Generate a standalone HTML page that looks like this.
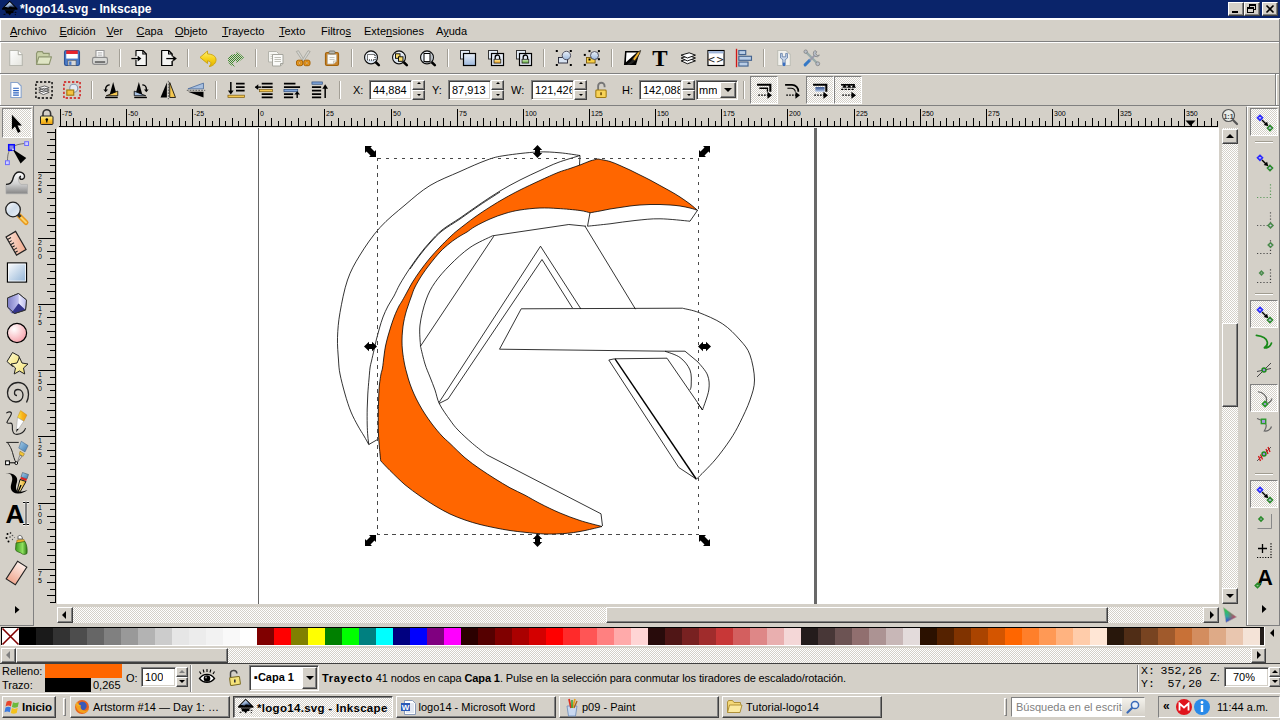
<!DOCTYPE html>
<html lang="es"><head><meta charset="utf-8"><title>*logo14.svg - Inkscape</title>
<style>
*{box-sizing:border-box;margin:0;padding:0}
html,body{width:1280px;height:720px;overflow:hidden;background:#d4d0c8;font-family:"Liberation Sans",sans-serif;font-size:11px;color:#000}
.a{position:absolute}
#title{left:0;top:0;width:1280px;height:18px;background:#0a246a}
#title .t{left:20px;top:1px;color:#fff;font-weight:bold;font-size:12px;line-height:16px;white-space:nowrap;letter-spacing:.1px}
.wb{top:2px;width:16px;height:14px;background:#d4d0c8;border:1px solid;border-color:#fff #404040 #404040 #fff;box-shadow:inset -1px -1px 0 #808080}
.hl{left:0;width:1280px;height:2px;border-top:1px solid #808080;border-bottom:1px solid #fff}
#menu span{position:absolute;top:24px;font-size:11px;line-height:14px;white-space:nowrap}
#menu u{text-decoration:underline;text-underline-offset:1px}
.sep{width:2px;height:26px;border-left:1px solid #a39f96;border-right:1px solid #fff}
.chk{background:conic-gradient(#fff 25%,#d4d0c8 0 50%,#fff 0 75%,#d4d0c8 0) 0 0/2px 2px}
.btn{background:#d4d0c8;border:1px solid;border-color:#fff #404040 #404040 #fff;box-shadow:inset -1px -1px 0 #808080,inset 1px 1px 0 #d4d0c8}
.sunk{border:1px solid;border-color:#808080 #fff #fff #808080;box-shadow:inset 1px 1px 0 #404040,inset -1px -1px 0 #d4d0c8;background:#fff}
.pressed{border:1px solid;border-color:#808080 #fff #fff #808080}
.lbl{font-size:11px;line-height:13px;white-space:nowrap}
.inp{font-size:11px;line-height:14px;white-space:nowrap;overflow:hidden}
#pal i{position:absolute;top:0;width:17px;height:17px;display:block}
.rl{font-family:"Liberation Sans",sans-serif;font-size:7px;fill:#000}
svg{position:absolute;overflow:visible}
.arr{width:0;height:0;border:4px solid transparent;position:absolute}
.tk{top:696px;height:22px;background:#d4d0c8;border:1px solid;border-color:#fff #404040 #404040 #fff;box-shadow:inset -1px -1px 0 #808080;font-size:11px;line-height:20px;white-space:nowrap;overflow:hidden}
.tk b,.tk span{position:absolute;top:0}

</style></head>
<body>
<div id="title" class="a"><div class="a t">*logo14.svg - Inkscape</div>
<svg class="a" style="left:0px;top:0px" width="20" height="18" viewBox="0 0 20 18"><defs><linearGradient id="gink1" x1="0" y1="0" x2=".7" y2="1"><stop offset="0" stop-color="#ffffff"/><stop offset=".55" stop-color="#9ab4d8"/><stop offset="1" stop-color="#1a3058"/></linearGradient></defs><path d="M9.700 .800L17.300 8.200c.6.700.3 1.500-.7 1.600L2.900 9.800c-.9-.1-1.200-.9-.6-1.600z" fill="#000"/><path d="M9.700 1.900L4.500 7.300c1.400-.5 2.700-.3 3.700.4 1.200-1.400 2.900-1.500 4.300-.5l2.600.1z" fill="url(#gink1)"/><path d="M4.500 10.300h10.500l-1.800 1.400.6 1.100-2.700.4-1.300 2.300-1.600-2-2.600-.2.400-1.400z" fill="#000"/><ellipse cx="4.500" cy="14.300" rx="1.100" ry=".5" fill="#000"/><ellipse cx="15.500" cy="12.200" rx="1" ry=".5" fill="#000"/><circle cx="15.300" cy="14.600" r=".6" fill="#000"/></svg>
<div class="a wb" style="left:1228px"><div class="a" style="left:3px;top:8px;width:6px;height:2px;background:#000"></div></div>
<div class="a wb" style="left:1244px"><div class="a" style="left:4px;top:1px;width:7px;height:6px;border:1px solid #000;border-top-width:2px"></div><div class="a" style="left:2px;top:4px;width:7px;height:6px;border:1px solid #000;border-top-width:2px;background:#d4d0c8"></div></div>
<div class="a wb" style="left:1262px"><svg style="left:3px;top:2px" width="9" height="8" viewBox="0 0 9 8"><path d="M.5.500l7 7M7.500.500l-7 7" stroke="#000" stroke-width="1.600"/></svg></div>
</div>
<div class="a" style="left:0;top:18px;width:1280px;height:2px;background:#fff"></div><div class="a" style="left:0;top:20px;width:1px;height:86px;background:#fff"></div>
<div id="menu">
<span style="left:10px"><u>A</u>rchivo</span><span style="left:59.500px"><u>E</u>dición</span><span style="left:106.500px"><u>V</u>er</span><span style="left:136.500px"><u>C</u>apa</span><span style="left:175px"><u>O</u>bjeto</span><span style="left:222px"><u>T</u>rayecto</span><span style="left:279px"><u>T</u>exto</span><span style="left:321px">Filtro<u>s</u></span><span style="left:364px">Exte<u>n</u>siones</span><span style="left:436px">A<u>y</u>uda</span>
</div>
<div class="a hl" style="top:41px"></div>
<div id="tb1"><div class="a sep" style="left:119px;top:49px;height:18px"></div>
<div class="a sep" style="left:187px;top:49px;height:18px"></div>
<div class="a sep" style="left:255px;top:49px;height:18px"></div>
<div class="a sep" style="left:351px;top:49px;height:18px"></div>
<div class="a sep" style="left:447px;top:49px;height:18px"></div>
<div class="a sep" style="left:543px;top:49px;height:18px"></div>
<div class="a sep" style="left:611px;top:49px;height:18px"></div>
<div class="a sep" style="left:763px;top:49px;height:18px"></div>
<div class="a sep" style="left:91px;top:81px;height:18px"></div>
<div class="a sep" style="left:215px;top:81px;height:18px"></div>
<div class="a sep" style="left:339px;top:81px;height:18px"></div>
<div class="a sep" style="left:743px;top:81px;height:18px"></div>
<div class="a chk pressed" style="left:750px;top:76px;width:28px;height:28px"></div>
<div class="a chk pressed" style="left:806px;top:76px;width:28px;height:28px"></div>
<div class="a chk pressed" style="left:834px;top:76px;width:28px;height:28px"></div>
<div class="a lbl" style="left:353px;top:84px">X:</div><div class="a sunk" style="left:369px;top:80px;width:43px;height:20px"><div class="a inp" style="left:3px;top:2px;width:37px">44,884</div></div><div class="a btn" style="left:412px;top:80px;width:13px;height:10px"><div class="arr" style="left:3.500px;top:1px;border-width:2.500px;border-top-width:0;border-bottom-color:#000"></div></div><div class="a btn" style="left:412px;top:90px;width:13px;height:10px"><div class="arr" style="left:3.500px;top:3px;border-width:2.500px;border-bottom-width:0;border-top-color:#000"></div></div>
<div class="a lbl" style="left:432px;top:84px">Y:</div><div class="a sunk" style="left:448px;top:80px;width:43px;height:20px"><div class="a inp" style="left:3px;top:2px;width:37px">87,913</div></div><div class="a btn" style="left:491px;top:80px;width:13px;height:10px"><div class="arr" style="left:3.500px;top:1px;border-width:2.500px;border-top-width:0;border-bottom-color:#000"></div></div><div class="a btn" style="left:491px;top:90px;width:13px;height:10px"><div class="arr" style="left:3.500px;top:3px;border-width:2.500px;border-bottom-width:0;border-top-color:#000"></div></div>
<div class="a lbl" style="left:511px;top:84px">W:</div><div class="a sunk" style="left:531px;top:80px;width:43px;height:20px"><div class="a inp" style="left:3px;top:2px;width:37px">121,426</div></div><div class="a btn" style="left:574px;top:80px;width:13px;height:10px"><div class="arr" style="left:3.500px;top:1px;border-width:2.500px;border-top-width:0;border-bottom-color:#000"></div></div><div class="a btn" style="left:574px;top:90px;width:13px;height:10px"><div class="arr" style="left:3.500px;top:3px;border-width:2.500px;border-bottom-width:0;border-top-color:#000"></div></div>
<div class="a lbl" style="left:622px;top:84px">H:</div><div class="a sunk" style="left:639px;top:80px;width:43px;height:20px"><div class="a inp" style="left:3px;top:2px;width:37px">142,088</div></div><div class="a btn" style="left:682px;top:80px;width:13px;height:10px"><div class="arr" style="left:3.500px;top:1px;border-width:2.500px;border-top-width:0;border-bottom-color:#000"></div></div><div class="a btn" style="left:682px;top:90px;width:13px;height:10px"><div class="arr" style="left:3.500px;top:3px;border-width:2.500px;border-bottom-width:0;border-top-color:#000"></div></div>
<div class="a sunk" style="left:696px;top:80px;width:42px;height:20px"><div class="a inp" style="left:2px;top:2px">mm</div></div><div class="a btn" style="left:720px;top:82px;width:16px;height:16px"><div class="arr" style="left:3px;top:5px;border-top-color:#000"></div></div>
<svg class="a" style="left:0;top:0" width="1280" height="110" viewBox="0 0 1280 110"><defs>
<radialGradient id="glens" cx=".4" cy=".35" r=".8"><stop offset="0" stop-color="#ffffff"/><stop offset="1" stop-color="#b4c8e0"/></radialGradient>
<linearGradient id="gundo" x1="0" y1="0" x2="0" y2="1"><stop offset="0" stop-color="#fdf07a"/><stop offset=".5" stop-color="#f7d21a"/><stop offset="1" stop-color="#e0b000"/></linearGradient>
<linearGradient id="gyel" x1="0" y1="0" x2="0" y2="1"><stop offset="0" stop-color="#fff2a8"/><stop offset="1" stop-color="#f0a018"/></linearGradient>
<linearGradient id="ggrn" x1="0" y1="0" x2="0" y2="1"><stop offset="0" stop-color="#d8f0c0"/><stop offset="1" stop-color="#58a838"/></linearGradient>
<linearGradient id="gpage" x1="0" y1="0" x2="1" y2="1"><stop offset="0" stop-color="#fff"/><stop offset="1" stop-color="#e4e4de"/></linearGradient>
<linearGradient id="gblue" x1="0" y1="0" x2="0" y2="1"><stop offset="0" stop-color="#eaf0f8"/><stop offset="1" stop-color="#9db8dc"/></linearGradient>
<pattern id="ghatch" width="2" height="2" patternUnits="userSpaceOnUse"><rect width="2" height="2" fill="#d4d0c8"/><rect width="1" height="1" fill="#3c8a2c"/><rect x="1" y="1" width="1" height="1" fill="#3c8a2c"/></pattern>
</defs><g transform="translate(6.80 48.80) scale(1.15)"><path d="M2.500 1.500h7.500l3.500 3.500v9.500h-11z" fill="url(#gpage)" stroke="#b8b8b0" stroke-width="1"/><path d="M10 1.500v3.500h3.500" fill="#fff" stroke="#b8b8b0" stroke-width="1" stroke-linejoin="round"/></g>
<g transform="translate(34.80 48.80) scale(1.15)"><path d="M1.500 13.500v-9.500l1-1.500h4l1 1.500h5v2" fill="#c9d1a8" stroke="#8e9670" stroke-width="1"/><path d="M1.500 13.500l2-6.500h11l-2 6.500z" fill="#dfe5c4" stroke="#8e9670" stroke-width="1" stroke-linejoin="round"/></g>
<g transform="translate(62.80 48.80) scale(1.15)"><rect x="1.500" y="1.500" width="13" height="13" rx="1.500" fill="#4a7bc8" stroke="#2f5596"/><rect x="3" y="1.500" width="10" height="3" fill="#e8232c"/><rect x="3" y="4.500" width="10" height="4" fill="#fff"/><rect x="4.500" y="10" width="7" height="4.500" fill="#d8d8d8" stroke="#555" stroke-width=".5"/><rect x="5.500" y="11" width="2" height="3" fill="#4a7bc8"/></g>
<g transform="translate(90.80 48.80) scale(1.15)"><path d="M4.500 7v-5.500h7v5.500" fill="#fff" stroke="#999"/><path d="M6 3.500h4M6 5.500h4" stroke="#bbb"/><rect x="1.500" y="7.500" width="13" height="6" rx="1.500" fill="#d9d9d6" stroke="#8c8c8c"/><path d="M3.500 11.500h9" stroke="#666" stroke-width="1.500"/></g>
<g transform="translate(130.80 48.80) scale(1.15)"><path d="M4.500 6.500v-5h6l3 3v10h-9v-5" fill="#f4f4f2" stroke="#000" stroke-linejoin="round"/><path d="M10.500 1.500v3h3" fill="none" stroke="#000"/><path d="M.500 8.500h6" stroke="#000" stroke-width="1.100"/><path d="M6 6l3.200 2.500-3.200 2.500z" fill="#000"/></g>
<g transform="translate(158.80 48.80) scale(1.15)"><path d="M2.500 1.500h6l3 3v2.500M11.500 10v4.500h-9v-13" fill="#f4f4f2" stroke="#000" stroke-linejoin="round"/><path d="M2.500 1.500h6l3 3v10h-9z" fill="#f4f4f2" stroke="none"/><path d="M2.500 1.500h6l3 3v2M11.500 10.500v4h-9v-13M8.500 1.500v3h3" fill="none" stroke="#000"/><path d="M6.500 8.500h7" stroke="#000" stroke-width="1.100"/><path d="M12.500 6l3.200 2.500-3.200 2.500z" fill="#000"/></g>
<g transform="translate(200.00 50.00) scale(1)"><path d="M0 7.400L7.500 1V4C12 4 16.500 6 16 10.500C15.500 14 12 16.500 9 16.500C11.500 14.500 12 11.500 7.500 10.800V13.500Z" fill="url(#gundo)" stroke="#c9a00c" stroke-width=".9" stroke-linejoin="round"/></g>
<g transform="translate(228.00 50.00) scale(1)"><path d="M16 7.400L8.500 1V4C4 4 -.500 6 0 10.500C.500 14 4 16.500 7 16.500C4.500 14.500 4 11.500 8.500 10.800V13.500Z" fill="url(#ghatch)" stroke="none"/></g>
<g transform="translate(268.00 50.00) scale(1)"><path d="M.500 1.500h8l2 2v8.500h-10z" fill="#f6f6f2" stroke="#b4b4ac"/><path d="M2.500 4.500h6M2.500 6.500h6M2.500 8.500h6" stroke="#d0d0c8"/><path d="M4.500 4.500h10.500v9l-2.500 2.500h-8z" fill="#fbfbf9" stroke="#a4a49c"/><path d="M6.500 7.500h6.500M6.500 9.500h6.500M6.500 11.500h6.500" stroke="#c0c0b8"/><path d="M12.500 16v-2.500h2.500" fill="none" stroke="#a4a49c"/></g>
<g transform="translate(296.00 50.00) scale(1)"><path d="M.300 1.500l2.200-.8 6 9.800-1.700.7z" fill="#d4d4d0" stroke="#9c9c94" stroke-width=".7"/><path d="M14.200 1.500l-2.200-.8-6 9.800 1.700.7z" fill="#d4d4d0" stroke="#9c9c94" stroke-width=".7"/><rect x=".500" y="10.200" width="6.200" height="5.500" rx="1.800" fill="#e8971c" stroke="#a86408" stroke-width="1"/><rect x="7.800" y="10.200" width="6.200" height="5.500" rx="1.800" fill="#e8971c" stroke="#a86408" stroke-width="1"/><rect x="2.600" y="12" width="2" height="2" rx=".6" fill="#f8d8a0" stroke="#a86408" stroke-width=".6"/><rect x="9.900" y="12" width="2" height="2" rx=".6" fill="#f8d8a0" stroke="#a86408" stroke-width=".6"/></g>
<g transform="translate(324.00 50.00) scale(1)"><rect x="1.500" y="2.500" width="13" height="13" rx="1.500" fill="#c8852f" stroke="#a3630b" stroke-width="1.200"/><path d="M3.500 4.500h9v6.500l-3 3h-6z" fill="#fafaf6" stroke="#b8b0a0" stroke-width=".7"/><path d="M9.500 14v-3h3" fill="#e8e8e0" stroke="#b8b0a0" stroke-width=".6"/><rect x="5" y="1" width="6" height="2.800" rx="1" fill="#b8b8b0" stroke="#6a6a60" stroke-width=".8"/><path d="M5.500 7.500h5M5.500 9.500h5" stroke="#c8c8c0"/></g>
<g transform="translate(364.00 50.00) scale(1)"><path d="M11.800 12.300l3 2.800" stroke="#000" stroke-width="2.600" stroke-linecap="round"/><circle cx="7" cy="7.400" r="6.400" fill="url(#glens)" stroke="#111" stroke-width="1.300"/><circle cx="7" cy="7.400" r="5.300" fill="none" stroke="#fff" stroke-width=".7" opacity=".7"/><rect x="3.500" y="4.500" width="7.500" height="5.500" fill="#fff" stroke="#000" stroke-width="1" stroke-dasharray="1 1"/></g>
<g transform="translate(392.00 50.00) scale(1)"><path d="M11.800 12.300l3 2.800" stroke="#000" stroke-width="2.600" stroke-linecap="round"/><circle cx="7" cy="7.400" r="6.400" fill="url(#glens)" stroke="#111" stroke-width="1.300"/><circle cx="7" cy="7.400" r="5.300" fill="none" stroke="#fff" stroke-width=".7" opacity=".7"/><rect x="3.500" y="3.800" width="4.500" height="4.500" fill="#f9dc6a" stroke="#000" stroke-width=".9"/><rect x="6.500" y="6.800" width="4.500" height="4.500" fill="#f9dc6a" stroke="#000" stroke-width=".9"/></g>
<g transform="translate(420.00 50.00) scale(1)"><path d="M11.800 12.300l3 2.800" stroke="#000" stroke-width="2.600" stroke-linecap="round"/><circle cx="7" cy="7.400" r="6.400" fill="url(#glens)" stroke="#111" stroke-width="1.300"/><circle cx="7" cy="7.400" r="5.300" fill="none" stroke="#fff" stroke-width=".7" opacity=".7"/><rect x="4" y="3.500" width="6" height="8" fill="#fff" stroke="#000" stroke-width="1"/><path d="M10.800 4.500v7.800h-5.500" fill="none" stroke="#666" stroke-width="1"/></g>
<g transform="translate(460.00 50.00) scale(1)"><rect x=".500" y=".500" width="9" height="8.500" fill="#e4ecf6" stroke="#333"/><rect x="3.500" y="3.500" width="12" height="12" fill="url(#gblue)" stroke="#000" stroke-width="1.200"/></g>
<g transform="translate(488.00 50.00) scale(1)"><rect x=".500" y=".500" width="9" height="8.500" fill="#e4ecf6" stroke="#333"/><rect x="3.500" y="3.500" width="12" height="12" fill="#e6edf7" stroke="#000" stroke-width="1.200"/><path d="M7.200 9.500v-2.300a2.200 2.200 0 0 1 4.400 0v2.300" fill="none" stroke="#000" stroke-width="1.300"/><rect x="6" y="9.300" width="6.800" height="3.800" fill="url(#gyel)" stroke="#222" stroke-width=".8"/></g>
<g transform="translate(516.00 50.00) scale(1)"><rect x=".500" y=".500" width="9" height="8.500" fill="#e4ecf6" stroke="#333"/><rect x="3.500" y="3.500" width="12" height="12" fill="#e6edf7" stroke="#000" stroke-width="1.200"/><path d="M7.200 9.500v-2.300a2.200 2.200 0 0 1 4.400 0v2.300" fill="none" stroke="#000" stroke-width="1.300"/><rect x="6" y="9.300" width="6.800" height="3.800" fill="url(#ggrn)" stroke="#222" stroke-width=".8"/></g>
<g transform="translate(556.00 50.00) scale(1)"><rect x="2.500" y="7.500" width="9" height="5.500" fill="#d8e3f1" stroke="#223" stroke-width=".9"/><circle cx="10.400" cy="5.500" r="4.200" fill="url(#gblue)" stroke="#445" stroke-width=".9"/><rect x="-0.19999999999999996" y="0" width="2" height="2" fill="#000"/><rect x="13.8" y="0" width="2" height="2" fill="#000"/><rect x="-0.19999999999999996" y="14" width="2" height="2" fill="#000"/><rect x="13.8" y="14" width="2" height="2" fill="#000"/></g>
<g transform="translate(584.00 50.00) scale(1)"><rect x="2.500" y="7.500" width="8.600" height="5.500" fill="#f7cf45" stroke="#7a5a10" stroke-width=".9"/><circle cx="10.500" cy="5.500" r="4" fill="url(#gblue)" stroke="#445" stroke-width=".9"/><rect x="-0.19999999999999996" y="3.9000000000000004" width="2" height="2" fill="#000"/><rect x="4.5" y="0.10000000000000009" width="2" height="2" fill="#000"/><rect x="13.9" y="0.10000000000000009" width="2" height="2" fill="#000"/><rect x="13.9" y="8.2" width="2" height="2" fill="#000"/><rect x="-0.19999999999999996" y="13.9" width="2" height="2" fill="#000"/><rect x="11.4" y="13.9" width="2" height="2" fill="#000"/><rect x="4.5" y="8.5" width="2" height="2" fill="#000"/></g>
<g transform="translate(622.80 48.80) scale(1.15)"><path d="M2 2h13l-3.500 12h-10.500z" fill="#000"/><path d="M3.200 3.200h9l-9.500 8.500z" fill="#fff"/><path d="M3 13.500c2-.5 4-2.500 5.500-4.500l2 1.500c-2 2.500-5 4-7.500 3z" fill="#222"/><path d="M8.500 9l4.500-6 2.500-1.500-1 3-4 6z" fill="#f5b52e" stroke="#222" stroke-width=".7"/></g>
<g transform="translate(650.80 48.80) scale(1.15)"><text x="8" y="15" text-anchor="middle" font-family="Liberation Serif,serif" font-weight="bold" font-size="20" fill="#000">T</text></g>
<g transform="translate(678.80 48.80) scale(1.15)"><path d="M2 10.500l7-2 5.500 2-7 2.500z" fill="#fff" stroke="#000" stroke-width=".8"/><path d="M2 8l7-2 5.500 2-7 2.500z" fill="#fff" stroke="#000" stroke-width=".8"/><path d="M2 5.500l7-2 5.500 2-7 2.500z" fill="#fff" stroke="#000" stroke-width=".8"/></g>
<g transform="translate(706.80 48.80) scale(1.15)"><rect x="1" y="1.500" width="14" height="13" fill="#fff" stroke="#000"/><rect x="1.500" y="2" width="13" height="2" fill="#9db4d8"/><text x="8" y="12.300" text-anchor="middle" font-family="DejaVu Sans,sans-serif" font-size="8.500" letter-spacing=".5" fill="#222">&lt;&gt;</text></g>
<g transform="translate(734.80 48.80) scale(1.15)"><path d="M1.500 0v16" stroke="#d01818" stroke-width="1.200"/><rect x="3.500" y="1.500" width="6" height="3.500" fill="#b9cde6" stroke="#44638f"/><rect x="3.500" y="6.500" width="11" height="3.500" fill="#b9cde6" stroke="#44638f"/><rect x="3.500" y="11.500" width="8" height="3.500" fill="#b9cde6" stroke="#44638f"/></g>
<g transform="translate(774.80 48.80) scale(1.15)"><path d="M2.500 1.500h7.500l3.500 3.500v9.500h-11z" fill="#f2f2ee" stroke="#c0c0b8"/><path d="M5 4v4l2 1.500v4.500h2v-4.500l2-1.500v-4h-1.500v3h-3v-3z" fill="#c9d7ea" stroke="#6b86ad" stroke-width=".8"/><rect x="7" y="12" width="2" height="3" fill="#3a6fc0"/></g>
<g transform="translate(802.80 48.80) scale(1.15)"><path d="M2 2l11 11" stroke="#9aa" stroke-width="2"/><path d="M2 14l4-4" stroke="#3478c6" stroke-width="2.600" stroke-linecap="round"/><path d="M6 10l5-5" stroke="#99a" stroke-width="1.600"/><path d="M10.500 1.500a3 3 0 0 0 0 5 3 3 0 0 0 4-1l-2 .3-1.200-1.500.8-1.800z" fill="#b8bec8" stroke="#777" stroke-width=".6"/><circle cx="13" cy="13" r="1.700" fill="#b8bec8" stroke="#777" stroke-width=".6"/><circle cx="2.500" cy="2.500" r="1.500" fill="#b8bec8" stroke="#777" stroke-width=".6"/></g>
<defs><linearGradient id="gblue2" x1="0" y1="0" x2="0" y2="1"><stop offset="0" stop-color="#2a4a8a"/><stop offset="1" stop-color="#bcd0ee"/></linearGradient></defs><g transform="translate(6.80 80.80) scale(1.15)"><path d="M3.500 1.500h6l3 3v10h-9z" fill="#fff" stroke="#8aa4cc"/><path d="M5.500 6.500h5M5.500 8.500h5M5.500 10.500h5M5.500 12.500h5" stroke="#2a62c0"/></g>
<g transform="translate(34.80 80.80) scale(1.15)"><rect x="1" y="1" width="14" height="14" fill="none" stroke="#000" stroke-width="1.200" stroke-dasharray="2 1.500"/><path d="M3.500 10l5-1.500 4 1.500-5 2z M3.500 8l5-1.500 4 1.500-5 2z M3.500 6l5-1.500 4 1.500-5 2z" fill="#fff" stroke="#444" stroke-width=".7"/></g>
<g transform="translate(62.80 80.80) scale(1.15)"><rect x="1" y="1" width="14" height="14" fill="none" stroke="#d01010" stroke-width="1.200" stroke-dasharray="2 1.500"/><circle cx="9.500" cy="6.500" r="3.500" fill="#e4ebf4" stroke="#8a9ab2"/><rect x="3.500" y="8" width="6" height="4.500" fill="#f5c342" stroke="#a07a10"/></g>
<g transform="translate(102.80 80.80) scale(1.15)"><path d="M9 1l3 11h-6z" fill="#000"/><path d="M3 13l10-4v4z" fill="#f5c850" stroke="#000" stroke-width=".7"/><path d="M6 3.500a3.500 3.500 0 0 0-3.500 3.500v1" fill="none" stroke="#000" stroke-width="1.200"/><path d="M.5 7.500h4l-2 2.500z" fill="#000"/><path d="M2 14.500h11" stroke="#000" stroke-width="1.200"/></g>
<g transform="translate(130.80 80.80) scale(1.15)"><path d="M7 1l-3 11h6z" fill="#000"/><path d="M13 13l-10-4v4z" fill="#a8c0e0" stroke="#000" stroke-width=".7"/><path d="M10 3.500a3.500 3.500 0 0 1 3.500 3.500v1" fill="none" stroke="#000" stroke-width="1.200"/><path d="M15.500 7.500h-4l2 2.500z" fill="#000"/><path d="M3 14.500h11" stroke="#000" stroke-width="1.200"/></g>
<g transform="translate(158.80 80.80) scale(1.15)"><path d="M7 1.500v13h-5.500z" fill="#000"/><path d="M9.500 1.500v13h5z" fill="#f5c850" stroke="#000" stroke-width=".7"/><path d="M8.300 0v16" stroke="#555" stroke-width=".8" stroke-dasharray="1.500 1"/></g>
<g transform="translate(186.80 80.80) scale(1.15)"><path d="M1 7l13.500-5v5z" fill="#a8c0e0" stroke="#4a6a9a" stroke-width=".7"/><path d="M1 9.500l13.500 5v-5z" fill="#000"/><path d="M0 8.300h16" stroke="#555" stroke-width=".8" stroke-dasharray="1.500 1"/></g>
<g transform="translate(226.80 80.80) scale(1.15)"><path d="M3.500 1v9" stroke="#000" stroke-width="1.300"/><path d="M1 8.500h5l-2.500 3.500z" fill="#000"/><path d="M8 2.500h7.500M8 5.500h7.500M8 8.500h7.500" stroke="#000" stroke-width="1.500"/><rect x="1" y="12.500" width="14.500" height="2" fill="#f5c850" stroke="#7a5a10" stroke-width=".6"/></g>
<g transform="translate(254.80 80.80) scale(1.15)"><path d="M6 2.500h9.500M6 5.500h9.500M6 11.500h9.500M6 14.500h9.500" stroke="#000" stroke-width="1.500"/><rect x="4" y="7.500" width="11.500" height="2" fill="#f5c850" stroke="#7a5a10" stroke-width=".6"/><path d="M.5 5.500h5" stroke="#000" stroke-width="1.200"/><path d="M0 5.500l3-2.500v5z" fill="#000"/></g>
<g transform="translate(282.80 80.80) scale(1.15)"><path d="M1 2.500h10M1 5.500h14M1 11.500h8M1 14.500h8" stroke="#000" stroke-width="1.500"/><rect x="1" y="7.500" width="12" height="2" fill="#7ea4d8" stroke="#2a4a7a" stroke-width=".6"/><path d="M12.500 15v-4" stroke="#000" stroke-width="1.200"/><path d="M10 12l2.500-3 2.500 3z" fill="#000"/></g>
<g transform="translate(310.80 80.80) scale(1.15)"><rect x="1" y="1" width="9" height="2" fill="#7ea4d8" stroke="#2a4a7a" stroke-width=".6"/><path d="M1 5.500h8M1 8.500h8M1 11.500h8M1 14.500h8" stroke="#000" stroke-width="1.500"/><path d="M12.500 15v-9" stroke="#000" stroke-width="1.300"/><path d="M10 7l2.500-4 2.500 4z" fill="#000"/></g>
<g transform="translate(591.80 80.80) scale(1.15)"><path d="M5.500 8v-3.500a2.800 2.800 0 0 1 5.600 0v1" fill="none" stroke="#777" stroke-width="1.600"/><rect x="3.500" y="8" width="9" height="6.500" rx=".8" fill="#f7d257" stroke="#a07a10" stroke-width=".9"/><rect x="7.300" y="10" width="1.500" height="2.500" fill="#7a5a10"/></g>
<g transform="translate(754.80 80.80) scale(1.15)"><path d="M2 3.500h11.500v6" fill="none" stroke="#000" stroke-width="1.800"/><path d="M4 6.500h7v3" fill="none" stroke="#000" stroke-width="1.200"/><path d="M3 12.500h9" stroke="#000" stroke-width="1.200" stroke-dasharray="1.500 1"/><path d="M11 9.500l4 3-4 3z" fill="#000"/></g>
<g transform="translate(782.80 80.80) scale(1.15)"><path d="M2 3.500h6a5.500 5.500 0 0 1 5.500 6" fill="none" stroke="#000" stroke-width="1.500"/><path d="M4 6.500h3a4 4 0 0 1 4 3" fill="none" stroke="#000" stroke-width="1"/><path d="M3 12.500h9" stroke="#000" stroke-width="1.200" stroke-dasharray="1.500 1"/><path d="M11 9.500l4 3-4 3z" fill="#000"/></g>
<g transform="translate(810.80 80.80) scale(1.15)"><path d="M2 3.500h11.500v6" fill="none" stroke="#000" stroke-width="1.800"/><rect x="4" y="5.500" width="8" height="4" fill="url(#gblue2)"/><path d="M3 12.500h9" stroke="#000" stroke-width="1.200" stroke-dasharray="1.500 1"/><path d="M11 9.500l4 3-4 3z" fill="#000"/></g>
<g transform="translate(838.80 80.80) scale(1.15)"><path d="M2 3.500h12" stroke="#000" stroke-width="1.500"/><path d="M3 6l2-3 2 3zM7 6l2-3 2 3zM11 6l2-3 2 3z" fill="#000"/><path d="M2 7.500h12" stroke="#000" stroke-width="1.200" stroke-dasharray="2 1"/><path d="M3 12.500h9" stroke="#000" stroke-width="1.200" stroke-dasharray="1.500 1"/><path d="M11 9.500l4 3-4 3z" fill="#000"/></g>
</svg>
</div>
<div class="a hl" style="top:73px"></div>
<div id="tb2"></div>
<div class="a" style="left:0;top:105px;width:1280px;height:1px;background:#808080"></div><div class="a" style="left:0;top:106px;width:33px;height:1px;background:#fff"></div><div class="a" style="left:1247px;top:106px;width:33px;height:1px;background:#fff"></div>

<div class="a" style="left:1279px;top:19px;width:1px;height:606px;background:#808080"></div>
<div class="a" style="left:1275px;top:74px;width:2px;height:31px;border-left:1px solid #808080;border-right:1px solid #fff"></div>
<!-- toolbox left -->
<div class="a" style="left:33px;top:106px;width:1px;height:519px;background:#808080"></div>
<div id="toolbox"><div class="a chk pressed" style="left:2px;top:108px;width:30px;height:30px"></div>
<svg class="a" style="left:0;top:0" width="40" height="720" viewBox="0 0 40 720"><defs>
<linearGradient id="gtw" x1="0" y1="0" x2="0" y2="1"><stop offset="0" stop-color="#ffffff"/><stop offset=".55" stop-color="#d0d0d0"/><stop offset="1" stop-color="#858585"/></linearGradient>
<linearGradient id="gglass" x1="0" y1="0" x2="1" y2="1"><stop offset="0" stop-color="#ffffff"/><stop offset=".5" stop-color="#cfdcea"/><stop offset="1" stop-color="#eef3f8"/></linearGradient>
<linearGradient id="gpink" x1="0" y1="0" x2="1" y2="1"><stop offset="0" stop-color="#fbe4da"/><stop offset="1" stop-color="#f0a88a"/></linearGradient>
<linearGradient id="gpink2" x1="0" y1="0" x2="0" y2="1"><stop offset="0" stop-color="#fdeee8"/><stop offset="1" stop-color="#f0a890"/></linearGradient>
<linearGradient id="grect" x1="0" y1="0" x2="1" y2="1"><stop offset="0" stop-color="#ffffff"/><stop offset="1" stop-color="#8fb2d6"/></linearGradient>
<linearGradient id="gbx1" x1="0" y1="0" x2="1" y2="0"><stop offset="0" stop-color="#7c7cc4"/><stop offset="1" stop-color="#c0c0f0"/></linearGradient>
<linearGradient id="gbx2" x1="0" y1="0" x2="1" y2="0"><stop offset="0" stop-color="#f0f0ff"/><stop offset="1" stop-color="#b8b8ec"/></linearGradient>
<radialGradient id="gell" cx=".35" cy=".3" r=".8"><stop offset="0" stop-color="#ffffff"/><stop offset="1" stop-color="#f59aa4"/></radialGradient>
<linearGradient id="gstar" x1="0" y1="0" x2="1" y2="1"><stop offset="0" stop-color="#fffde0"/><stop offset="1" stop-color="#f3e06a"/></linearGradient>
<linearGradient id="gpen" x1="0" y1="0" x2="1" y2="0"><stop offset="0" stop-color="#fff04a"/><stop offset=".5" stop-color="#f7b41c"/><stop offset="1" stop-color="#f09a10"/></linearGradient>
<linearGradient id="gbluepen" x1="0" y1="0" x2="1" y2="1"><stop offset="0" stop-color="#a8d0ea"/><stop offset="1" stop-color="#3e78b0"/></linearGradient>
<linearGradient id="gnib" x1="0" y1="0" x2="1" y2="0"><stop offset="0" stop-color="#fff8c0"/><stop offset="1" stop-color="#e8a818"/></linearGradient>
<linearGradient id="gspray" x1="0" y1="0" x2="1" y2="0"><stop offset="0" stop-color="#3c9a1c"/><stop offset=".6" stop-color="#8ee060"/><stop offset="1" stop-color="#2c7a14"/></linearGradient>
</defs><g transform="translate(4.5 111.0)"><path d="M7.400 3.700V18.800L10.500 15.600L13.500 22L16.100 20.600L13 14.400H17.400Z" fill="#000"/></g>
<g transform="translate(4.5 141.0)"><path d="M3 19.500C3 13 4.500 9 7 6.500C11 3.500 16 3 20 2.500" fill="none" stroke="#666" stroke-width=".9"/><rect x="4.200" y="3.700" width="5.600" height="5.600" fill="#8888e0" stroke="#0a0aff" stroke-width="1.500"/><rect x="20.200" y=".700" width="3.800" height="3.800" fill="#d0d0ff" stroke="#6a6aff" stroke-width="1"/><rect x="1" y="19.800" width="3.800" height="3.800" fill="#d0d0ff" stroke="#6a6aff" stroke-width="1"/><path d="M8 8.100L21.750 16.900L16.100 22.500Z" fill="#000"/><circle cx="8.500" cy="8.500" r="1" fill="#fff" opacity=".8"/></g>
<g transform="translate(4.5 171.0)"><path d="M1.500 13.400C5 13.400 7 12 8 9C9 5 10.500 1 14.500 1C18 1 20.500 3.500 20 6C19.600 8.500 16.500 9 15.500 7.500C15 6.500 15.500 5.500 16.500 5.300C14.500 5 13.500 7 14 9.500C14.500 11.500 15.500 13 16.500 13.400H23V22.750H1.500Z" fill="url(#gtw)" stroke="#aaa" stroke-width=".7"/><path d="M1.500 13.400C5 13.400 7 12 8 9C9 5 10.500 1 14.500 1C18 1 20.500 3.500 20 6C19.600 8.500 16.500 9 15.500 7.500C15 6.500 15.500 5.500 16.500 5.300" fill="none" stroke="#1a1a1a" stroke-width="1.400"/></g>
<g transform="translate(4.5 201.0)"><path d="M14.500 14.500l7 7" stroke="#e8981c" stroke-width="5" stroke-linecap="round"/><path d="M14.500 14.500l7 7" stroke="#fbd36a" stroke-width="2" stroke-linecap="round"/><path d="M13 13l3 3" stroke="#333" stroke-width="3"/><circle cx="8.500" cy="8.500" r="7.300" fill="url(#gglass)" stroke="#222" stroke-width="1.300"/></g>
<g transform="translate(4.5 231.0)"><g transform="rotate(-30 12 12)"><rect x="6" y="1.500" width="11" height="21" fill="url(#gpink)" stroke="#222" stroke-width="1.200"/><path d="M6 4.500h4M6 7.500h3M6 10.500h4M6 13.500h3M6 16.500h4M6 19.500h3" stroke="#222" stroke-width="1"/></g></g>
<g transform="translate(4.5 261.0)"><rect x="3" y="2" width="19" height="19" fill="url(#grect)" stroke="#000" stroke-width="1.300"/><rect x="4" y="3" width="17" height="17" fill="none" stroke="#fff" stroke-width=".8"/></g>
<g transform="translate(4.5 291.0)"><path d="M3 7l11-4.500 8 6.500-1 10-11 3.500-7-6.500z" fill="#8a8ad0" stroke="#333" stroke-width="1"/><path d="M3 7l11-4.500 0 10-7 10-4-6.500z" fill="url(#gbx1)"/><path d="M14 2.500l8 6.500-1 10-7-6.500z" fill="url(#gbx2)"/><path d="M14 12.500l7 6.500-11 3.500-3-.5z" fill="#34348c"/><path d="M3 7l11-4.500 8 6.500-1 10-11 3.500-7-6.500z" fill="none" stroke="#333" stroke-width="1"/></g>
<g transform="translate(4.5 321.0)"><circle cx="12.500" cy="12" r="9.600" fill="url(#gell)" stroke="#000" stroke-width="1.200"/></g>
<g transform="translate(4.5 351.0)"><path d="M8 1.500l6.500 3.500.5 7-7 3.500-5.500-5z" fill="url(#gstar)" stroke="#222" stroke-width="1"/><path d="M15 6.500l2.500 5.500 6 1-4.500 4 1.200 6-5.200-3-5.300 3 1.300-6-4.500-4 6-1z" fill="url(#gstar)" stroke="#222" stroke-width="1"/></g>
<g transform="translate(4.5 381.0)"><path d="M12.500 14.500c-1.500 0-2.500-1-2.500-2.500 0-2 1.500-3.500 3.500-3.500 3 0 5 2.500 5 5.500 0 4-3 7-7 7-5 0-8.500-4-8.500-9 0-6 4.500-10.500 10.500-10.500 6.500 0 10.500 5 10.500 12 0 3-.8 5.500-2 8" fill="none" stroke="#222" stroke-width="1.300"/></g>
<g transform="translate(4.5 411.0)"><path d="M1.750 2.100C3.500 1 6 .800 6.750 1.500C8 3.500 3.500 8 2.400 11.500C3.500 13.500 6.500 11 7.400 12.750C8.500 15 7.500 17 8 19C8.500 22 10.500 23.500 12.500 23.400C16.500 23 20 20.500 21.100 17.100" fill="none" stroke="#222" stroke-width="1.100"/><path d="M16.100 -.400L22.400 4L19.250 10.250L13 6.500Z" fill="url(#gpen)" stroke="#c88a08" stroke-width=".5"/><path d="M13 6.500L19.250 10.250L14.250 17.750L11.750 19.600Z" fill="#fff" stroke="#999" stroke-width=".5"/><path d="M11.600 21.200L12.300 18L14.300 17.800Z" fill="#000"/></g>
<g transform="translate(4.5 441.0)"><path d="M1.750 1.400H14.250M3 1.500C5.500 5 7 8 8 11.500C9 15 9.500 18 11.750 22.100" fill="none" stroke="#222" stroke-width="1"/><path d="M16.750 .250L23.600 4.600L20.500 10.900L14.250 7.100Z" fill="url(#gbluepen)" stroke="#3a5a80" stroke-width=".5"/><path d="M15.500 10.250L19.900 12.750L18.600 15.250L14.900 13.400Z" fill="#f4c63a" stroke="#8a6a10" stroke-width=".5"/><path d="M15.300 14.300L17.500 15.300L12.800 21.500Z" fill="#e4e4e4" stroke="#444" stroke-width=".6"/><path d="M5 21.800H10.500" stroke="#000" stroke-width="1"/><rect x="1.100" y="19.900" width="3.800" height="3.800" fill="#fff" stroke="#000" stroke-width="1"/><circle cx="11.750" cy="22.100" r="1.400" fill="#fff" stroke="#000" stroke-width="1"/></g>
<g transform="translate(4.5 471.0)"><path d="M1 2c6 0 8 4 6 10s0 10 6 10.500c4 .5 8-2 10-3.500-2 .5-6 2.500-9 1.500-3-1-3-5-1.500-9.500 1.500-5-3-9.500-11.500-9z" fill="#000"/><path d="M18 1.500l6 2-1.500 4.500-6-2z" fill="url(#gbluepen)" stroke="#345" stroke-width=".5"/><path d="M16.500 6l6 2-.7 2-6-2z" fill="#e02020"/><path d="M15.500 8.500l6 2-6 10.500-3-1z" fill="url(#gnib)" stroke="#111" stroke-width="1"/><path d="M14 20l2.500-6" stroke="#000" stroke-width="1.300"/></g>
<g transform="translate(4.5 501.0)"><text x="10.500" y="21.500" text-anchor="middle" font-family="Liberation Sans,sans-serif" font-weight="bold" font-size="26" fill="#000">A</text><path d="M18.500 1.500h2M22.500 1.500h2M21.500 1.500v22M18.500 23.500h2M22.500 23.500h2" stroke="#fff" stroke-width="2.400"/><path d="M18.500 1.500h2.500M22 1.500h2.500M21.500 1.500v22M18.500 23.500h2.500M22 23.500h2.500" stroke="#000" stroke-width="1"/></g>
<g transform="translate(4.5 531.0)"><circle cx="3" cy="3" r="1" fill="#000"/><circle cx="6" cy="2" r=".8" fill="#000"/><circle cx="2" cy="7" r="1" fill="#000"/><circle cx="5.500" cy="6" r=".8" fill="#333"/><circle cx="8" cy="4.500" r=".8" fill="#555"/><circle cx="4" cy="10.500" r="1" fill="#000"/><circle cx="8" cy="8.500" r=".7" fill="#555"/><circle cx="10" cy="6.500" r=".6" fill="#777"/><path d="M13.500 6c0-2 3.500-2 4 0l.5 2h-4.500z" fill="#fff" stroke="#444" stroke-width=".8"/><path d="M12.500 9l7-.5.800 2.500-8.300 1z" fill="#f2b62e" stroke="#7a5a10" stroke-width=".5"/><path d="M11.500 12l9-1.500c2 3.500 2.500 8 2 12-2 1.500-5 1-6-.5-3-1-5.500-2-5.500-3.500z" fill="url(#gspray)" stroke="#2a6010" stroke-width=".7"/></g>
<g transform="translate(4.5 561.0)"><g transform="rotate(33 12 12)"><rect x="6.500" y="1.500" width="11" height="21" fill="url(#gpink2)" stroke="#222" stroke-width="1.100"/></g></g>
<path d="M15 606l4.500 3.700-4.500 3.700z" fill="#000"/></svg>
<svg class="a" style="left:38px;top:108px" width="18" height="18" viewBox="0 0 18 18"><path d="M5 8v-2.500a3.800 3.800 0 0 1 7.600 0v2.500" fill="none" stroke="#333" stroke-width="1.600"/><rect x="2.500" y="8" width="12.500" height="8.500" rx="1" fill="url(#glock)" stroke="#222" stroke-width="1"/><circle cx="8.800" cy="11.500" r="1.300" fill="#000"/><rect x="8.200" y="12" width="1.200" height="2.500" fill="#000"/><defs><linearGradient id="glock" x1="0" y1="0" x2="0" y2="1"><stop offset="0" stop-color="#fff2a0"/><stop offset=".5" stop-color="#f9c52c"/><stop offset="1" stop-color="#e89a10"/></linearGradient></defs></svg>
</div>

<!-- canvas -->
<div class="a" style="left:57px;top:127px;width:1162px;height:477px;background:#fff;border-top:1px solid #ece9e4"></div>
<svg class="a" style="left:0;top:0" width="1280" height="720" viewBox="0 0 1280 720">
<path d="M59 126.500H1218" stroke="#000" stroke-width="1" shape-rendering="crispEdges"/>
<path d="M55.500 129V603" stroke="#000" stroke-width="1" shape-rendering="crispEdges"/>
<path d="M60.5 109V126M66.5 121V126M73.5 118V126M80.5 121V126M86.5 118V126M93.5 121V126M100.5 118V126M106.5 121V126M113.5 118V126M119.5 121V126M126.5 109V126M133.5 121V126M139.5 118V126M146.5 121V126M152.5 118V126M159.5 121V126M166.5 118V126M172.5 121V126M179.5 118V126M185.5 121V126M192.5 109V126M199.5 121V126M205.5 118V126M212.5 121V126M219.5 118V126M225.5 121V126M232.5 118V126M238.5 121V126M245.5 118V126M252.5 121V126M258.5 109V126M265.5 121V126M271.5 118V126M278.5 121V126M285.5 118V126M291.5 121V126M298.5 118V126M305.5 121V126M311.5 118V126M318.5 121V126M324.5 109V126M331.5 121V126M338.5 118V126M344.5 121V126M351.5 118V126M357.5 121V126M364.5 118V126M371.5 121V126M377.5 118V126M384.5 121V126M391.5 109V126M397.5 121V126M404.5 118V126M410.5 121V126M417.5 118V126M424.5 121V126M430.5 118V126M437.5 121V126M443.5 118V126M450.5 121V126M457.5 109V126M463.5 121V126M470.5 118V126M477.5 121V126M483.5 118V126M490.5 121V126M496.5 118V126M503.5 121V126M510.5 118V126M516.5 121V126M523.5 109V126M529.5 121V126M536.5 118V126M543.5 121V126M549.5 118V126M556.5 121V126M563.5 118V126M569.5 121V126M576.5 118V126M582.5 121V126M589.5 109V126M596.5 121V126M602.5 118V126M609.5 121V126M615.5 118V126M622.5 121V126M629.5 118V126M635.5 121V126M642.5 118V126M648.5 121V126M655.5 109V126M662.5 121V126M668.5 118V126M675.5 121V126M682.5 118V126M688.5 121V126M695.5 118V126M701.5 121V126M708.5 118V126M715.5 121V126M721.5 109V126M728.5 121V126M734.5 118V126M741.5 121V126M748.5 118V126M754.5 121V126M761.5 118V126M768.5 121V126M774.5 118V126M781.5 121V126M787.5 109V126M794.5 121V126M801.5 118V126M807.5 121V126M814.5 118V126M820.5 121V126M827.5 118V126M834.5 121V126M840.5 118V126M847.5 121V126M854.5 109V126M860.5 121V126M867.5 118V126M873.5 121V126M880.5 118V126M887.5 121V126M893.5 118V126M900.5 121V126M906.5 118V126M913.5 121V126M920.5 109V126M926.5 121V126M933.5 118V126M940.5 121V126M946.5 118V126M953.5 121V126M959.5 118V126M966.5 121V126M973.5 118V126M979.5 121V126M986.5 109V126M992.5 121V126M999.5 118V126M1006.5 121V126M1012.5 118V126M1019.5 121V126M1025.5 118V126M1032.5 121V126M1039.5 118V126M1045.5 121V126M1052.5 109V126M1059.5 121V126M1065.5 118V126M1072.5 121V126M1078.5 118V126M1085.5 121V126M1092.5 118V126M1098.5 121V126M1105.5 118V126M1111.5 121V126M1118.5 109V126M1125.5 121V126M1131.5 118V126M1138.5 121V126M1145.5 118V126M1151.5 121V126M1158.5 118V126M1164.5 121V126M1171.5 118V126M1178.5 121V126M1184.5 109V126M1191.5 121V126M1197.5 118V126M1204.5 121V126M1211.5 118V126M1217.5 121V126" stroke="#000" stroke-width="1" fill="none" shape-rendering="crispEdges"/><text x="62" y="115.500" class="rl">-75</text><text x="128" y="115.500" class="rl">-50</text><text x="194" y="115.500" class="rl">-25</text><text x="260" y="115.500" class="rl">0</text><text x="326" y="115.500" class="rl">25</text><text x="393" y="115.500" class="rl">50</text><text x="459" y="115.500" class="rl">75</text><text x="525" y="115.500" class="rl">100</text><text x="591" y="115.500" class="rl">125</text><text x="657" y="115.500" class="rl">150</text><text x="723" y="115.500" class="rl">175</text><text x="789" y="115.500" class="rl">200</text><text x="856" y="115.500" class="rl">225</text><text x="922" y="115.500" class="rl">250</text><text x="988" y="115.500" class="rl">275</text><text x="1054" y="115.500" class="rl">300</text><text x="1120" y="115.500" class="rl">325</text><text x="1186" y="115.500" class="rl">350</text>
<path d="M47 132.5H55M50 139.5H55M47 145.5H55M50 152.5H55M47 159.5H55M50 165.5H55M38 172.5H55M50 178.5H55M47 185.5H55M50 192.5H55M47 198.5H55M50 205.5H55M47 212.5H55M50 218.5H55M47 225.5H55M50 231.5H55M38 238.5H55M50 245.5H55M47 251.5H55M50 258.5H55M47 264.5H55M50 271.5H55M47 278.5H55M50 284.5H55M47 291.5H55M50 298.5H55M38 304.5H55M50 311.5H55M47 317.5H55M50 324.5H55M47 331.5H55M50 337.5H55M47 344.5H55M50 350.5H55M47 357.5H55M50 364.5H55M38 370.5H55M50 377.5H55M47 384.5H55M50 390.5H55M47 397.5H55M50 403.5H55M47 410.5H55M50 417.5H55M47 423.5H55M50 430.5H55M38 436.5H55M50 443.5H55M47 450.5H55M50 456.5H55M47 463.5H55M50 469.5H55M47 476.5H55M50 483.5H55M47 489.5H55M50 496.5H55M38 503.5H55M50 509.5H55M47 516.5H55M50 522.5H55M47 529.5H55M50 536.5H55M47 542.5H55M50 549.5H55M47 555.5H55M50 562.5H55M38 569.5H55M50 575.5H55M47 582.5H55M50 589.5H55M47 595.5H55M50 602.5H55" stroke="#000" stroke-width="1" fill="none" shape-rendering="crispEdges"/><text x="38" y="179.0" class="rl">2</text><text x="38" y="186.2" class="rl">2</text><text x="38" y="193.4" class="rl">5</text><text x="38" y="245.0" class="rl">2</text><text x="38" y="252.2" class="rl">0</text><text x="38" y="259.4" class="rl">0</text><text x="38" y="311.0" class="rl">1</text><text x="38" y="318.2" class="rl">7</text><text x="38" y="325.4" class="rl">5</text><text x="38" y="377.0" class="rl">1</text><text x="38" y="384.2" class="rl">5</text><text x="38" y="391.4" class="rl">0</text><text x="38" y="443.0" class="rl">1</text><text x="38" y="450.2" class="rl">2</text><text x="38" y="457.4" class="rl">5</text><text x="38" y="510.0" class="rl">1</text><text x="38" y="517.2" class="rl">0</text><text x="38" y="524.4" class="rl">0</text><text x="38" y="576.0" class="rl">7</text><text x="38" y="583.2" class="rl">5</text>
<path d="M258.500 128V604" stroke="#666" stroke-width="1" shape-rendering="crispEdges"/>
<rect x="814" y="128" width="3" height="476" fill="#686868"/>
<path d="M580.0 155.5C576.7 155.1 567.1 153.4 560.0 152.8C552.9 152.2 546.7 151.6 537.5 152.0C528.3 152.4 513.4 154.2 505.0 155.5C496.6 156.8 494.5 157.3 487.0 160.0C479.5 162.7 469.5 167.2 460.0 171.5C450.5 175.8 439.2 179.9 430.0 185.5C420.8 191.1 413.3 198.0 405.0 205.0C396.7 212.0 387.5 219.2 380.0 227.5C372.5 235.8 365.4 246.2 360.0 255.0C354.6 263.8 350.8 270.4 347.5 280.0C344.2 289.6 341.7 302.9 340.0 312.5C338.3 322.1 337.8 329.6 337.5 337.5C337.2 345.4 338.1 353.9 338.5 360.0C338.9 366.1 338.9 368.3 340.0 374.0C341.1 379.7 343.2 387.7 345.0 394.0C346.8 400.3 348.8 406.7 351.0 412.0C353.2 417.3 355.8 422.0 358.0 426.0C360.2 430.0 362.2 432.9 364.0 436.0C365.8 439.1 368.0 443.1 368.8 444.5L377.5 439.5 M580.0 155.5C576.3 156.7 564.7 160.0 558.0 162.5C551.3 165.0 546.3 167.6 540.0 170.5C533.7 173.4 526.7 176.6 520.0 180.0C513.3 183.4 506.7 187.0 500.0 191.0C493.3 195.0 486.7 199.5 480.0 204.0C473.3 208.5 466.3 213.7 460.0 218.0C453.7 222.3 447.0 226.0 442.0 230.0C437.0 234.0 433.7 238.0 430.0 242.0C426.3 246.0 423.3 249.7 420.0 254.0C416.7 258.3 413.3 263.0 410.0 268.0C406.7 273.0 402.7 279.3 400.0 284.0C397.3 288.7 396.0 292.3 394.0 296.0C392.0 299.7 389.8 302.5 388.0 306.0C386.2 309.5 384.4 313.3 383.0 317.0C381.6 320.7 380.6 324.3 379.5 328.0C378.4 331.7 377.4 335.3 376.5 339.0C375.6 342.7 374.8 346.3 374.0 350.0C373.2 353.7 372.2 358.0 371.5 361.0C370.8 364.0 370.4 365.0 370.0 368.0C369.6 371.0 369.4 374.7 369.0 379.0C368.6 383.3 368.1 389.0 367.8 394.0C367.5 399.0 367.3 404.0 367.2 409.0C367.1 414.0 367.1 419.5 367.2 424.0C367.3 428.5 367.5 432.6 367.8 436.0C368.1 439.4 368.6 443.1 368.8 444.5 M580 155.5L579.5 165 M500.0 192.0C496.7 194.2 486.7 200.5 480.0 205.0C473.3 209.5 466.3 214.7 460.0 219.0C453.7 223.3 447.0 227.0 442.0 231.0C437.0 235.0 433.7 239.0 430.0 243.0C426.3 247.0 423.3 250.7 420.0 255.0C416.7 259.3 411.7 266.7 410.0 269.0 M590.0 212.8L587.5 226.2 M587.5 226.2C591.2 225.8 602.1 224.7 610.0 223.8C617.9 222.8 626.7 221.3 635.0 220.5C643.3 219.7 650.8 218.6 660.0 218.8C669.2 218.9 685.0 220.8 690.0 221.2L697.5 210.3 M492.5 235.8L568.8 224.5L586.0 226.2 M492.5 235.8C488.8 237.7 477.1 242.6 470.0 247.5C462.9 252.4 455.8 259.2 450.0 265.0C444.2 270.8 439.0 276.7 435.0 282.5C431.0 288.3 428.5 292.9 426.0 300.0C423.5 307.1 420.9 317.3 420.0 325.0C419.1 332.7 420.4 342.7 420.5 346.2C421.2 349.2 423.4 358.9 425.0 364.0C426.6 369.1 428.3 372.7 430.0 377.0C431.7 381.3 433.4 385.5 435.0 390.0C436.6 394.5 437.0 399.0 439.5 404.0C442.0 409.0 446.9 415.7 450.0 420.0C453.1 424.3 454.2 426.1 458.0 430.0C461.8 433.9 467.7 439.4 472.5 443.5C477.3 447.6 484.4 452.9 486.8 454.8L601 513.8L602.5 526 M493.8 236.2L420.5 346.2 M439.0 402.5L540.5 246.2L580.8 308.8 M439.0 403.5L448.0 399.0L542.0 259.5L572.5 308.0 M585.0 226.2L635.5 309.2 M499.5 349.2L521.2 308.8L682.5 308.2C685.2 309.0 692.1 309.9 698.8 312.5C705.4 315.1 715.6 319.2 722.5 323.8C729.4 328.3 735.4 334.8 740.0 340.0C744.6 345.2 747.6 348.3 750.0 355.0C752.4 361.7 754.5 372.5 754.5 380.0C754.5 387.5 752.4 392.9 750.0 400.0C747.6 407.1 743.3 415.8 740.0 422.5C736.7 429.2 734.2 433.8 730.0 440.0C725.8 446.2 720.6 453.4 715.0 460.0C709.4 466.6 699.4 476.2 696.2 479.5 M499.5 349.2L665.0 351.2L685.0 351.2L698.0 362.0C699.6 364.2 705.7 370.3 707.5 375.0C709.3 379.7 709.6 384.2 708.8 390.0C707.9 395.8 703.5 406.7 702.5 410.0L697.5 403 M665.0 351.2C667.5 352.3 675.8 354.4 680.0 357.5C684.2 360.6 688.1 365.4 690.0 370.0C691.9 374.6 691.2 381.7 691.2 385.0C691.2 388.3 690.2 389.2 690.0 390.0 M696.2 479.0L678.8 467.5L608.8 360.0L614.5 358.8L667.0 358.2L697.5 402.5L702.5 410.0" fill="none" stroke="#000" stroke-width=".8" stroke-linejoin="round"/>
<path d="M615.0 358.8L696.2 479.0" fill="none" stroke="#000" stroke-width="1.400"/>
<path d="M697.5 210.3C696.2 209.2 692.9 206.2 690.0 204.0C687.1 201.8 683.3 199.2 680.0 197.0C676.7 194.8 673.3 192.9 670.0 191.0C666.7 189.1 663.3 187.3 660.0 185.5C656.7 183.7 653.3 181.8 650.0 180.0C646.7 178.2 643.3 176.7 640.0 175.0C636.7 173.3 633.3 171.6 630.0 170.0C626.7 168.4 623.3 166.9 620.0 165.5C616.7 164.1 613.7 162.6 610.0 161.5C606.3 160.4 600.0 159.4 598.0 159.0C596.7 159.3 593.0 160.0 590.0 161.0C587.0 162.0 583.3 163.8 580.0 165.0C576.7 166.2 573.7 167.2 570.0 168.5C566.3 169.8 563.0 170.5 558.0 172.5C553.0 174.5 546.3 177.6 540.0 180.5C533.7 183.4 525.8 187.1 520.0 190.0C514.2 192.9 510.0 195.2 505.0 198.0C500.0 200.8 495.0 203.8 490.0 207.0C485.0 210.2 480.3 213.2 475.0 217.0C469.7 220.8 462.2 226.7 458.0 230.0C453.8 233.3 453.0 234.2 450.0 237.0C447.0 239.8 443.3 243.5 440.0 247.0C436.7 250.5 433.3 254.0 430.0 258.0C426.7 262.0 423.0 266.8 420.0 271.0C417.0 275.2 414.3 279.2 412.0 283.0C409.7 286.8 407.8 290.8 406.0 294.0C404.2 297.2 402.7 300.0 401.5 302.0C400.3 304.0 400.2 303.7 399.0 306.0C397.8 308.3 395.8 312.7 394.5 316.0C393.2 319.3 392.1 322.7 391.0 326.0C389.9 329.3 388.9 332.7 388.0 336.0C387.1 339.3 386.2 342.7 385.5 346.0C384.8 349.3 384.5 352.3 384.0 356.0C383.5 359.7 383.0 365.0 382.5 368.0C382.0 371.0 381.5 371.3 381.0 374.0C380.5 376.7 379.9 380.7 379.5 384.0C379.1 387.3 379.0 390.7 378.8 394.0C378.6 397.3 378.6 400.7 378.5 404.0C378.4 407.3 378.3 409.7 378.3 414.0C378.3 418.3 378.2 424.8 378.3 430.0C378.4 435.2 378.8 439.9 379.2 445.0C379.6 450.1 380.4 458.1 380.7 460.8C382.2 462.4 385.9 466.5 390.0 470.5C394.1 474.5 400.0 480.5 405.0 484.8C410.0 489.0 415.0 492.5 420.0 496.0C425.0 499.5 430.0 502.8 435.0 505.8C440.0 508.8 445.0 511.6 450.0 514.0C455.0 516.4 460.0 518.2 465.0 520.0C470.0 521.8 475.0 523.2 480.0 524.5C485.0 525.8 490.0 526.8 495.0 527.8C500.0 528.8 505.0 529.8 510.0 530.5C515.0 531.2 519.2 531.7 525.0 532.3C530.8 532.9 539.2 533.8 545.0 534.0C550.8 534.2 555.8 533.9 560.0 533.7C564.2 533.5 565.8 533.5 570.0 533.0C574.2 532.5 579.7 531.6 585.0 530.5C590.3 529.4 599.2 527.2 602.0 526.5C598.3 525.5 587.0 522.8 580.0 520.5C573.0 518.2 566.7 515.8 560.0 513.0C553.3 510.2 545.8 506.5 540.0 503.5C534.2 500.5 530.0 497.9 525.0 495.2C520.0 492.6 515.0 490.5 510.0 487.8C505.0 485.0 500.0 481.9 495.0 478.8C490.0 475.6 485.0 472.5 480.0 469.0C475.0 465.5 470.0 462.0 465.0 457.8C460.0 453.5 453.8 447.1 450.0 443.5C446.2 439.9 445.0 439.2 442.0 436.0C439.0 432.8 434.8 427.7 432.0 424.0C429.2 420.3 427.2 417.3 425.0 414.0C422.8 410.7 420.8 407.3 419.0 404.0C417.2 400.7 415.5 397.3 414.0 394.0C412.5 390.7 411.2 387.3 410.0 384.0C408.8 380.7 407.9 377.3 407.0 374.0C406.1 370.7 405.2 367.8 404.5 364.0C403.8 360.2 402.9 354.8 402.5 351.0C402.1 347.2 402.0 344.3 402.0 341.0C402.0 337.7 402.2 334.0 402.5 331.0C402.8 328.0 403.0 325.8 403.5 323.0C404.0 320.2 404.8 316.8 405.5 314.0C406.2 311.2 407.0 309.0 408.0 306.0C409.0 303.0 410.3 299.2 411.5 296.0C412.7 292.8 413.2 290.5 415.0 287.0C416.8 283.5 419.5 278.8 422.0 275.0C424.5 271.2 427.0 267.8 430.0 264.0C433.0 260.2 436.7 255.5 440.0 252.0C443.3 248.5 446.7 245.7 450.0 243.0C453.3 240.3 457.2 237.8 460.0 236.0C462.8 234.2 464.5 233.6 467.0 232.0C469.5 230.4 471.2 228.7 475.0 226.5C478.8 224.3 485.0 221.2 490.0 219.0C495.0 216.8 500.0 215.0 505.0 213.5C510.0 212.0 514.2 210.9 520.0 210.0C525.8 209.1 533.7 208.2 540.0 208.0C546.3 207.8 551.3 208.1 558.0 208.5C564.7 208.9 574.7 209.8 580.0 210.5C585.3 211.2 588.3 212.4 590.0 212.8C591.7 212.5 596.7 211.6 600.0 211.0C603.3 210.4 606.7 209.6 610.0 209.0C613.3 208.4 616.7 208.0 620.0 207.5C623.3 207.0 626.7 206.4 630.0 206.0C633.3 205.6 636.7 205.2 640.0 205.0C643.3 204.8 646.7 204.6 650.0 204.5C653.3 204.4 656.7 204.4 660.0 204.5C663.3 204.6 666.7 204.8 670.0 205.0C673.3 205.2 676.7 205.5 680.0 206.0C683.3 206.5 687.1 207.3 690.0 208.0C692.9 208.7 696.2 209.9 697.5 210.3Z" fill="#ff6600" stroke="#000" stroke-width=".8" stroke-linejoin="round"/>
<rect x="377.500" y="158.500" width="321" height="376" fill="none" stroke="#484848" stroke-width="1" stroke-dasharray="3.500 4.500" shape-rendering="crispEdges"/>
<path d="M-5.500 -5.500H1.500L0 -4L4 0L5.500 -1.500V5.500H-1.500L0 4L-4 0L-5.500 1.500Z" transform="translate(370.5 151.5) rotate(0)" fill="#000"/>
<path d="M-5.500 -5.500H1.500L0 -4L4 0L5.500 -1.500V5.500H-1.500L0 4L-4 0L-5.500 1.500Z" transform="translate(704.5 151.5) rotate(90)" fill="#000"/>
<path d="M-5.500 -5.500H1.500L0 -4L4 0L5.500 -1.500V5.500H-1.500L0 4L-4 0L-5.500 1.500Z" transform="translate(370.5 540.5) rotate(90)" fill="#000"/>
<path d="M-5.500 -5.500H1.500L0 -4L4 0L5.500 -1.500V5.500H-1.500L0 4L-4 0L-5.500 1.500Z" transform="translate(704.5 540.5) rotate(0)" fill="#000"/>
<path d="M-6.500 0L-1.500 -4.700V-2.500H1.500V-4.700L6.500 0L1.500 4.700V2.500H-1.500V4.700Z" transform="translate(537.5 151.5) rotate(90)" fill="#000"/>
<path d="M-6.500 0L-1.500 -4.700V-2.500H1.500V-4.700L6.500 0L1.500 4.700V2.500H-1.500V4.700Z" transform="translate(537.5 540.5) rotate(90)" fill="#000"/>
<path d="M-6.500 0L-1.500 -4.700V-2.500H1.500V-4.700L6.500 0L1.500 4.700V2.500H-1.500V4.700Z" transform="translate(370.5 346.5) rotate(0)" fill="#000"/>
<path d="M-6.500 0L-1.500 -4.700V-2.500H1.500V-4.700L6.500 0L1.500 4.700V2.500H-1.500V4.700Z" transform="translate(704.5 346.5) rotate(0)" fill="#000"/>

</svg>

<!-- scrollbars -->
<div class="a chk" style="left:1222px;top:128px;width:16px;height:476px"></div>
<div class="a btn" style="left:1222px;top:129px;width:16px;height:15px"><div class="arr" style="left:3px;top:0px;border-bottom-color:#000"></div></div>
<div class="a btn" style="left:1222px;top:588px;width:16px;height:16px"><div class="arr" style="left:3px;top:5px;border-top-color:#000"></div></div>
<div class="a btn" style="left:1222px;top:323px;width:16px;height:84px"></div>
<div class="a chk" style="left:57px;top:607px;width:1162px;height:16px"></div>
<div class="a btn" style="left:57px;top:607px;width:16px;height:16px"><div class="arr" style="left:0px;top:3px;border-right-color:#000"></div></div>
<div class="a btn" style="left:1203px;top:607px;width:16px;height:16px"><div class="arr" style="left:6px;top:3px;border-left-color:#000"></div></div>
<div class="a btn" style="left:606px;top:607px;width:502px;height:16px"></div>

<!-- snap bar -->
<div id="snapbar"><div class="a" style="left:1246px;top:107px;width:2px;height:518px;border-left:1px solid #808080;border-right:1px solid #fff"></div>
<div class="a chk pressed" style="left:1250px;top:108px;width:28px;height:28px"></div>
<div class="a chk pressed" style="left:1250px;top:300px;width:28px;height:28px"></div>
<div class="a chk pressed" style="left:1250px;top:384px;width:28px;height:28px"></div>
<div class="a chk pressed" style="left:1250px;top:480px;width:28px;height:28px"></div>
<div class="a" style="left:1255px;top:141px;width:18px;height:2px;border-top:1px solid #a09c90;border-bottom:1px solid #fff"></div>
<div class="a" style="left:1255px;top:293px;width:18px;height:2px;border-top:1px solid #a09c90;border-bottom:1px solid #fff"></div>
<div class="a" style="left:1255px;top:473px;width:18px;height:2px;border-top:1px solid #a09c90;border-bottom:1px solid #fff"></div>
<svg class="a" style="left:0;top:0" width="1280" height="720" viewBox="0 0 1280 720"><g transform="translate(1252.0 110.0)"><path d="M8 5.3l2.5 2.5-2.5 2.5-2.5-2.5z" fill="#b8b0f0" stroke="#2a2aff" stroke-width="1.600"/><path d="M18 15.5l2.5 2.5-2.5 2.5-2.5-2.5z" fill="#c0b8e8" stroke="#2a8a2a" stroke-width="1.600"/><path d="M10 10l4.500 4.500" stroke="#000" stroke-width="1.400"/><path d="M16.300 16.300l-4.600-1.200 3.400-3.400z" fill="#000"/></g>
<g transform="translate(1252.0 150.0)"><path d="M8 5.3l2.5 2.5-2.5 2.5-2.5-2.5z" fill="#b8b0f0" stroke="#2a2aff" stroke-width="1.600"/><path d="M18 15.5l2.5 2.5-2.5 2.5-2.5-2.5z" fill="#c0b8e8" stroke="#2a8a2a" stroke-width="1.600"/><path d="M10 10l4.500 4.500" stroke="#000" stroke-width="1.400"/><path d="M16.300 16.300l-4.600-1.200 3.400-3.400z" fill="#000"/></g>
<g transform="translate(1252.0 178.0)"><path d="M5 19.500h13.500v-14" fill="none" stroke="#5a9a5a" stroke-width="1.200" stroke-dasharray="1.200 2"/></g>
<g transform="translate(1252.0 206.0)"><path d="M5 19.500h13.500v-14" fill="none" stroke="#555" stroke-width="1.200" stroke-dasharray="1.200 2"/><path d="M18.5 17.1l2.4 2.4-2.4 2.4-2.4-2.4z" fill="#d0d0e0" stroke="#4a8a4a" stroke-width="1.600"/></g>
<g transform="translate(1252.0 234.0)"><path d="M5 19.500h13.500v-14" fill="none" stroke="#444" stroke-width="1.200" stroke-dasharray="1.200 2"/><path d="M18.5 8.8l2.2 2.2-2.2 2.2-2.2-2.2z" fill="#d0d0e0" stroke="#4a8a4a" stroke-width="1.600"/></g>
<g transform="translate(1252.0 262.0)"><path d="M5 20.500h13.500v-14" fill="none" stroke="#444" stroke-width="1.200" stroke-dasharray="1.200 2"/><path d="M9.5 9.2l1.8 1.8-1.8 1.8-1.8-1.8z" fill="#d0d0e0" stroke="#4a8a4a" stroke-width="1.600"/></g>
<g transform="translate(1252.0 302.0)"><path d="M8 5.3l2.5 2.5-2.5 2.5-2.5-2.5z" fill="#b8b0f0" stroke="#2a2aff" stroke-width="1.600"/><path d="M18 15.5l2.5 2.5-2.5 2.5-2.5-2.5z" fill="#c0b8e8" stroke="#2a8a2a" stroke-width="1.600"/><path d="M10 10l4.500 4.500" stroke="#000" stroke-width="1.400"/><path d="M16.300 16.300l-4.600-1.200 3.400-3.400z" fill="#000"/></g>
<g transform="translate(1252.0 330.0)"><path d="M4.400 5.400C9 6 14.500 8 15.300 12C15.800 15 14 17 11.900 18C15 18 18.500 16.500 19.500 13" fill="none" stroke="#1a8a1a" stroke-width="1.700" stroke-linecap="round"/></g>
<g transform="translate(1252.0 358.0)"><path d="M5 19L19 5M5 13.500L19 10.500" stroke="#444" stroke-width="1"/><circle cx="12" cy="12" r="2" fill="#9a8ad8" stroke="#1a8a1a" stroke-width="1.400"/></g>
<g transform="translate(1252.0 386.0)"><path d="M5.900 5.750C10 6 15.500 9.500 14.500 15L13 18C16 17.500 19 16 20 12.500" fill="none" stroke="#666" stroke-width="1.200"/><path d="M13 15.4l2.6 2.6-2.6 2.6-2.6-2.6z" fill="#a898e0" stroke="#2a9a2a" stroke-width="1.600"/></g>
<g transform="translate(1252.0 414.0)"><path d="M5 4.500C7.500 5.500 9.500 6 11.500 7.400C15 9.500 15 13 12.300 17C15 17.500 18.500 16 19.500 12.500" fill="none" stroke="#666" stroke-width="1.200"/><rect x="9.300" y="5.200" width="4.400" height="4.400" fill="#a898e0" stroke="#2a9a2a" stroke-width="1.400"/></g>
<g transform="translate(1252.0 442.0)"><path d="M5 19L19 5" stroke="#555" stroke-width="1"/><path d="M6.500 14l2 5M8.500 12.500l2 5M14 7l2 5M16 5l2 5" stroke="#d01818" stroke-width="1.300"/><circle cx="12" cy="12" r="2" fill="#9a8ad8" stroke="#1a8a1a" stroke-width="1.400"/></g>
<g transform="translate(1252.0 482.0)"><path d="M8 5.3l2.5 2.5-2.5 2.5-2.5-2.5z" fill="#b8b0f0" stroke="#2a2aff" stroke-width="1.600"/><path d="M18 15.5l2.5 2.5-2.5 2.5-2.5-2.5z" fill="#c0b8e8" stroke="#2a8a2a" stroke-width="1.600"/><path d="M10 10l4.500 4.500" stroke="#000" stroke-width="1.400"/><path d="M16.300 16.300l-4.600-1.200 3.400-3.400z" fill="#000"/></g>
<g transform="translate(1252.0 509.0)"><path d="M19.500 5v14.500h-14" fill="none" stroke="#888" stroke-width="1"/><path d="M9 8l2 2-2 2-2-2z" fill="#c0c0e0" stroke="#2a8a2a" stroke-width="1.600"/></g>
<g transform="translate(1252.0 537.0)"><path d="M6 11.500h9M10.500 7v9" stroke="#000" stroke-width="1.300"/><path d="M5 20.500h14v-15" fill="none" stroke="#000" stroke-width="1.200" stroke-dasharray="1.200 1.500"/></g>
<g transform="translate(1252.0 565.0)"><text x="13" y="20" text-anchor="middle" font-family="Liberation Sans,sans-serif" font-weight="bold" font-size="22" fill="#000">A</text><path d="M3 21l6-3" stroke="#2a8a2a" stroke-width="1.200"/><path d="M5.5 18.3l2.2 2.2-2.2 2.2-2.2-2.2z" fill="#90c090" stroke="#2a8a2a" stroke-width="1.600"/></g>
<path d="M1262 605l4.500 4-4.500 4z" fill="#000"/><path d="M1185.500 120.500h10l-5 5.500z" fill="#000"/><path d="M1233 120l4 4" stroke="#555" stroke-width="2.200" stroke-linecap="round"/><circle cx="1228.500" cy="115.500" r="6" fill="#e8ece8" stroke="#555" stroke-width="1.200"/><text x="1228.500" y="118.500" text-anchor="middle" font-family="Liberation Sans,sans-serif" font-weight="bold" font-size="7" fill="#444">1:1</text><defs><linearGradient id="gcm1" x1="0" y1="0" x2="0" y2="1"><stop offset="0" stop-color="#38c838"/><stop offset=".6" stop-color="#30a8a0"/><stop offset="1" stop-color="#3838d8"/></linearGradient><linearGradient id="gcm2" x1="0" y1="0" x2="1" y2="0"><stop offset=".3" stop-color="#e03030" stop-opacity="0"/><stop offset="1" stop-color="#e03060" stop-opacity=".95"/></linearGradient></defs><path d="M1223.500 607.500L1236.500 617L1226 622.500Z" fill="url(#gcm1)"/><path d="M1223.500 607.500L1236.500 617L1226 622.500Z" fill="url(#gcm2)" stroke="#b0aca0" stroke-width=".6"/></svg>
</div>

<!-- palette -->
<div class="a" style="left:0;top:625px;width:34px;height:1px;background:#808080"></div><div class="a" style="left:1246px;top:625px;width:34px;height:1px;background:#808080"></div>
<div class="a" style="left:1px;top:627px;width:1264px;height:19px;background:#000;border-right:1px solid #fff;border-bottom:1px solid #fff"></div>
<div id="pal" class="a" style="left:0;top:628px;width:1264px;height:17px;overflow:hidden">
<i style="left:2px;background:#fff"></i><i style="left:19px;background:#000000"></i><i style="left:36px;background:#1a1a1a"></i><i style="left:53px;background:#333333"></i><i style="left:70px;background:#4d4d4d"></i><i style="left:87px;background:#666666"></i><i style="left:104px;background:#808080"></i><i style="left:121px;background:#999999"></i><i style="left:138px;background:#b3b3b3"></i><i style="left:155px;background:#cccccc"></i><i style="left:172px;background:#e6e6e6"></i><i style="left:189px;background:#ececec"></i><i style="left:206px;background:#f2f2f2"></i><i style="left:223px;background:#f9f9f9"></i><i style="left:240px;background:#ffffff"></i><i style="left:257px;background:#800000"></i><i style="left:274px;background:#ff0000"></i><i style="left:291px;background:#808000"></i><i style="left:308px;background:#ffff00"></i><i style="left:325px;background:#008000"></i><i style="left:342px;background:#00ff00"></i><i style="left:359px;background:#008080"></i><i style="left:376px;background:#00ffff"></i><i style="left:393px;background:#000080"></i><i style="left:410px;background:#0000ff"></i><i style="left:427px;background:#800080"></i><i style="left:444px;background:#ff00ff"></i><i style="left:461px;background:#2b0000"></i><i style="left:478px;background:#550000"></i><i style="left:495px;background:#800000"></i><i style="left:512px;background:#aa0000"></i><i style="left:529px;background:#d40000"></i><i style="left:546px;background:#ff0000"></i><i style="left:563px;background:#ff2a2a"></i><i style="left:580px;background:#ff5555"></i><i style="left:597px;background:#ff8080"></i><i style="left:614px;background:#ffaaaa"></i><i style="left:631px;background:#ffd5d5"></i><i style="left:648px;background:#280b0b"></i><i style="left:665px;background:#501616"></i><i style="left:682px;background:#782121"></i><i style="left:699px;background:#a02c2c"></i><i style="left:716px;background:#c83737"></i><i style="left:733px;background:#d35f5f"></i><i style="left:750px;background:#de8787"></i><i style="left:767px;background:#e9afaf"></i><i style="left:784px;background:#f4d7d7"></i><i style="left:801px;background:#241c1c"></i><i style="left:818px;background:#483737"></i><i style="left:835px;background:#6c5353"></i><i style="left:852px;background:#916f6f"></i><i style="left:869px;background:#ac9393"></i><i style="left:886px;background:#c8b7b7"></i><i style="left:903px;background:#e3dbdb"></i><i style="left:920px;background:#2b1100"></i><i style="left:937px;background:#552200"></i><i style="left:954px;background:#803300"></i><i style="left:971px;background:#aa4400"></i><i style="left:988px;background:#d45500"></i><i style="left:1005px;background:#ff6600"></i><i style="left:1022px;background:#ff7f2a"></i><i style="left:1039px;background:#ff9955"></i><i style="left:1056px;background:#ffb380"></i><i style="left:1073px;background:#ffccaa"></i><i style="left:1090px;background:#ffe6d5"></i><i style="left:1107px;background:#28170b"></i><i style="left:1124px;background:#502d16"></i><i style="left:1141px;background:#784421"></i><i style="left:1158px;background:#a05a2c"></i><i style="left:1175px;background:#c87137"></i><i style="left:1192px;background:#d38d5f"></i><i style="left:1209px;background:#deaa87"></i><i style="left:1226px;background:#e9c6af"></i><i style="left:1243px;background:#f4e3d7"></i><i style="left:1260px;background:#241f1c"></i>
</div>
<svg class="a" style="left:2px;top:628px" width="17" height="17" viewBox="0 0 17 17"><path d="M.500 .500l16 16M16.500 .500L.500 16.500" stroke="#800000" stroke-width="1.600"/></svg>
<div class="arr" style="left:1266px;top:629px;border-right-color:#000"></div>
<!-- palette scrollbar -->
<div class="a chk" style="left:1px;top:648px;width:1265px;height:15px"></div>
<div class="a btn" style="left:1px;top:648px;width:15px;height:15px"><div class="arr" style="left:0px;top:2px;border-right-color:#808080"></div></div>
<div class="a btn" style="left:16px;top:648px;width:212px;height:15px"></div>
<div class="a btn" style="left:1251px;top:648px;width:15px;height:15px"><div class="arr" style="left:5px;top:2px;border-left-color:#000"></div></div>
<div class="a" style="left:0;top:663px;width:1280px;height:1px;background:#404040"></div>

<div id="status"><div class="a lbl" style="left:2px;top:665px">Relleno:</div><div class="a lbl" style="left:2px;top:679px">Trazo:</div>
<div class="a" style="left:45px;top:664px;width:77px;height:14px;background:#ff6600"></div><div class="a" style="left:45px;top:678px;width:46px;height:14px;background:#000"></div>
<div class="a lbl" style="left:93px;top:679px">0,265</div><div class="a lbl" style="left:126px;top:672px">O:</div>
<div class="a sunk" style="left:141px;top:667px;width:35px;height:20px"><div class="a inp" style="left:3px;top:2px">100</div></div>
<div class="a btn" style="left:176px;top:667px;width:12px;height:10px"><div class="arr" style="left:2px;top:-1px;border-width:3px;border-bottom-color:#808080"></div></div><div class="a btn" style="left:176px;top:677px;width:12px;height:10px"><div class="arr" style="left:2px;top:2px;border-width:3px;border-top-color:#000"></div></div>
<div class="a" style="left:190px;top:665px;width:2px;height:27px;border-left:1px solid #808080;border-right:1px solid #fff"></div>
<svg class="a" style="left:198px;top:668px" width="50" height="20" viewBox="0 0 50 20"><path d="M1.500 10.500c4-5.500 11-5.500 15 0-4 5-11 5-15 0z" fill="#fff" stroke="#000" stroke-width="1.300"/><circle cx="9" cy="10.500" r="3.300" fill="#000"/><circle cx="8" cy="9.500" r="1" fill="#999"/><path d="M3 6l-1.500-2.500M6 4.500l-.8-3M9 4v-3M12 4.500l.8-3M15 6l1.500-2.500" stroke="#000" stroke-width="1.100"/><g transform="translate(2.500 0)"><path d="M30 9.500v-3.500a3.200 3.200 0 0 1 6.400-.5" fill="none" stroke="#444" stroke-width="1.500"/><rect x="29.500" y="9" width="10" height="8" rx="1" transform="rotate(-8 34 13)" fill="#f4e27a" stroke="#7a6a20" stroke-width="1"/><rect x="33.500" y="11.500" width="1.600" height="3" fill="#333"/></g></svg>
<div class="a sunk" style="left:249px;top:665px;width:70px;height:26px"><div class="a" style="left:4px;top:5px;font-size:11px;line-height:13px;font-weight:bold;white-space:nowrap">▪Capa 1</div></div>
<div class="a btn" style="left:302px;top:667px;width:15px;height:22px"><div class="arr" style="left:3px;top:8px;border-top-color:#000"></div></div>
<div class="a lbl" style="left:322px;top:672px;font-size:11px;letter-spacing:-.11px"><b style="letter-spacing:.7px">Trayecto</b> 41 nodos en capa <b>Capa 1</b>. Pulse en la selección para conmutar los tiradores de escalado/rotación.</div>
<div class="a" style="left:1137px;top:665px;width:2px;height:27px;border-left:1px solid #808080;border-right:1px solid #fff"></div>
<div class="a" style="left:1141px;top:664px;font-family:'Liberation Mono',monospace;font-size:11.500px;line-height:13px;white-space:pre">X:</div><div class="a" style="left:1141px;top:677px;font-family:'Liberation Mono',monospace;font-size:11.500px;line-height:13px;white-space:pre">Y:</div>
<div class="a" style="left:1150px;top:664px;width:52px;text-align:right;font-family:'Liberation Mono',monospace;font-size:11.500px;line-height:13px;white-space:pre">352,26</div><div class="a" style="left:1150px;top:677px;width:52px;text-align:right;font-family:'Liberation Mono',monospace;font-size:11.500px;line-height:13px;white-space:pre">57,20</div>
<div class="a lbl" style="left:1210px;top:671px">Z:</div>
<div class="a sunk" style="left:1224px;top:667px;width:45px;height:20px"><div class="a inp" style="left:8px;top:2px">70%</div></div>
<div class="a btn" style="left:1269px;top:667px;width:12px;height:10px"><div class="arr" style="left:2px;top:-1px;border-width:3px;border-bottom-color:#000"></div></div><div class="a btn" style="left:1269px;top:677px;width:12px;height:10px"><div class="arr" style="left:2px;top:2px;border-width:3px;border-top-color:#000"></div></div>
</div>
<div id="taskbar"><div class="a" style="left:0;top:693px;width:1280px;height:1px;background:#fff"></div>
<div class="a tk" style="left:2px;width:54px"><b style="left:19px;font-size:11.500px">Inicio</b><svg style="left:2px;top:1px" width="17" height="17" viewBox="0 0 16 16"><path d="M1.500 3.500c2-1.200 3.500-1 5 0l-1 4.500c-1.500-1-3-1.200-5 0z" fill="#e8452c"/><path d="M7.500 4c1.500 1 3.300 1 5.500 0l-1 4.500c-2 1-4 1-5.500 0z" fill="#6cba3c"/><path d="M.500 9c2-1.200 3.500-1 5 0l-1 4.500c-1.500-1-3-1.200-5 0z" fill="#3a7ae0"/><path d="M6.500 9.500c1.500 1 3.300 1 5.500 0l-1 4.500c-2 1-4 1-5.500 0z" fill="#f4c21c"/></svg></div>
<div class="a" style="left:63px;top:698px;width:3px;height:18px;border:1px solid;border-color:#fff #808080 #808080 #fff"></div>
<div class="a tk" style="left:70px;width:160px"><span style="left:22px">Artstorm #14 — Day 1: …</span><svg style="left:3px;top:2px" width="16" height="16" viewBox="0 0 16 16"><circle cx="8" cy="8" r="7" fill="#e8641c"/><circle cx="8.500" cy="7" r="4.200" fill="#3a5ab8"/><path d="M1.500 6c1 5 4 8 8 8 3 0 5-2.500 5.500-5-1 2-3 3-5 2.500-3-.5-4-3-3-5l-2-1-1.500-2.500c-1 .5-2 1.800-2 3z" fill="#f4a21c"/><path d="M2 4l1.500 2 2 .5" fill="none" stroke="#e8c040" stroke-width=".8"/></svg></div>
<div class="a chk" style="left:233px;top:696px;width:160px;height:22px;border:1px solid;border-color:#404040 #fff #fff #404040;box-shadow:inset 1px 1px 0 #808080"><b class="a" style="left:23px;top:1px;font-size:11.500px;line-height:20px;white-space:nowrap;letter-spacing:.3px">*logo14.svg - Inkscape</b></div>
<svg class="a" style="left:236px;top:698px" width="20" height="18" viewBox="0 0 20 18"><defs><linearGradient id="gink2" x1="0" y1="0" x2=".7" y2="1"><stop offset="0" stop-color="#ffffff"/><stop offset=".55" stop-color="#9ab4d8"/><stop offset="1" stop-color="#1a3058"/></linearGradient></defs><path d="M9.700 .800L17.300 8.200c.6.700.3 1.500-.7 1.600L2.900 9.800c-.9-.1-1.200-.9-.6-1.600z" fill="#000"/><path d="M9.700 1.900L4.500 7.300c1.400-.5 2.700-.3 3.700.4 1.200-1.400 2.900-1.500 4.300-.5l2.600.1z" fill="url(#gink2)"/><path d="M4.500 10.300h10.500l-1.800 1.400.6 1.100-2.700.4-1.300 2.300-1.600-2-2.600-.2.400-1.400z" fill="#000"/><ellipse cx="4.500" cy="14.300" rx="1.100" ry=".5" fill="#000"/><ellipse cx="15.500" cy="12.200" rx="1" ry=".5" fill="#000"/><circle cx="15.300" cy="14.600" r=".6" fill="#000"/></svg>
<div class="a tk" style="left:396px;width:160px"><span style="left:21.500px">logo14 - Microsoft Word</span><svg style="left:3px;top:2px" width="17" height="17" viewBox="0 0 17 17"><path d="M4.500 1.500h8l3 3v11h-11z" fill="#fff" stroke="#8a9ab8"/><path d="M6 5h8M6 7h8M6 9h8M6 11h8M6 13h8" stroke="#b8c4dc" stroke-width=".8"/><rect x="1" y="4" width="9" height="8" fill="#2a5ab8"/><text x="5.500" y="11" text-anchor="middle" font-family="Liberation Sans,sans-serif" font-weight="bold" font-size="8" fill="#fff">W</text></svg></div>
<div class="a tk" style="left:559px;width:160px"><span style="left:22px">p09 - Paint</span><svg style="left:4px;top:1px" width="16" height="19" viewBox="0 0 16 19"><path d="M3 8h10l-1.500 10h-7z" fill="#c8d8f0" stroke="#6a8ab8" stroke-width=".8"/><path d="M5 1l2 9" stroke="#e03020" stroke-width="1.800"/><path d="M11 1l-2.500 9" stroke="#e8a020" stroke-width="1.800"/><path d="M8 2v8" stroke="#30a030" stroke-width="1.500"/><path d="M13 3l-3 7" stroke="#a06020" stroke-width="1.300"/></svg></div>
<div class="a tk" style="left:722px;width:160px"><span style="left:23px">Tutorial-logo14</span><svg style="left:4px;top:3px" width="16" height="14" viewBox="0 0 16 14"><path d="M.500 12.500v-10.500l1-1.500h4l1.500 2h6.500v2" fill="#f4d878" stroke="#a8882c" stroke-width=".9"/><path d="M.500 12.500l2-7.500h12.500l-2 7.500z" fill="#fbe9a0" stroke="#a8882c" stroke-width=".9" stroke-linejoin="round"/></svg></div>
<div class="a" style="left:1004px;top:698px;width:3px;height:18px;border:1px solid;border-color:#fff #808080 #808080 #fff"></div>
<div class="a" style="left:1011px;top:697px;width:134px;height:20px;background:#fff;border:1px solid;border-color:#808080 #fff #fff #808080"><div class="a" style="left:4px;top:2px;width:106px;overflow:hidden;white-space:nowrap;color:#7f7f7f;font-size:11px;line-height:14px">Búsqueda en el escritorio</div><div class="a" style="left:110px;top:0;width:23px;height:18px;background:linear-gradient(#f4f2ec,#d4d0c8)"><svg style="left:4px;top:2px" width="15" height="14" viewBox="0 0 15 14"><path d="M6 8l-4.500 4.500" stroke="#3a6ab8" stroke-width="2.200" stroke-linecap="round"/><circle cx="9" cy="5" r="3.600" fill="#e8f0fb" stroke="#3a6ab8" stroke-width="1.500"/></svg></div></div>
<div class="a" style="left:1158px;top:696px;width:122px;height:22px;border:1px solid;border-color:#808080 #fff #fff #808080"></div>
<div class="a" style="left:1163px;top:699px;font-size:12px;line-height:14px;font-weight:bold">«</div>
<svg class="a" style="left:1175px;top:698px" width="40" height="18" viewBox="0 0 40 18"><circle cx="9" cy="9" r="8" fill="#e0141c"/><path d="M4.500 12.500v-7l4.500 4 4.500-4v7" fill="none" stroke="#fff" stroke-width="1.800"/><circle cx="27" cy="9" r="8" fill="#2a8ae8"/><circle cx="27" cy="4.500" r="1.400" fill="#fff"/><rect x="25.800" y="7" width="2.400" height="7" fill="#fff"/></svg>
<div class="a lbl" style="left:1217px;top:701px">11:44 a.m.</div>
</div>

</body></html>
